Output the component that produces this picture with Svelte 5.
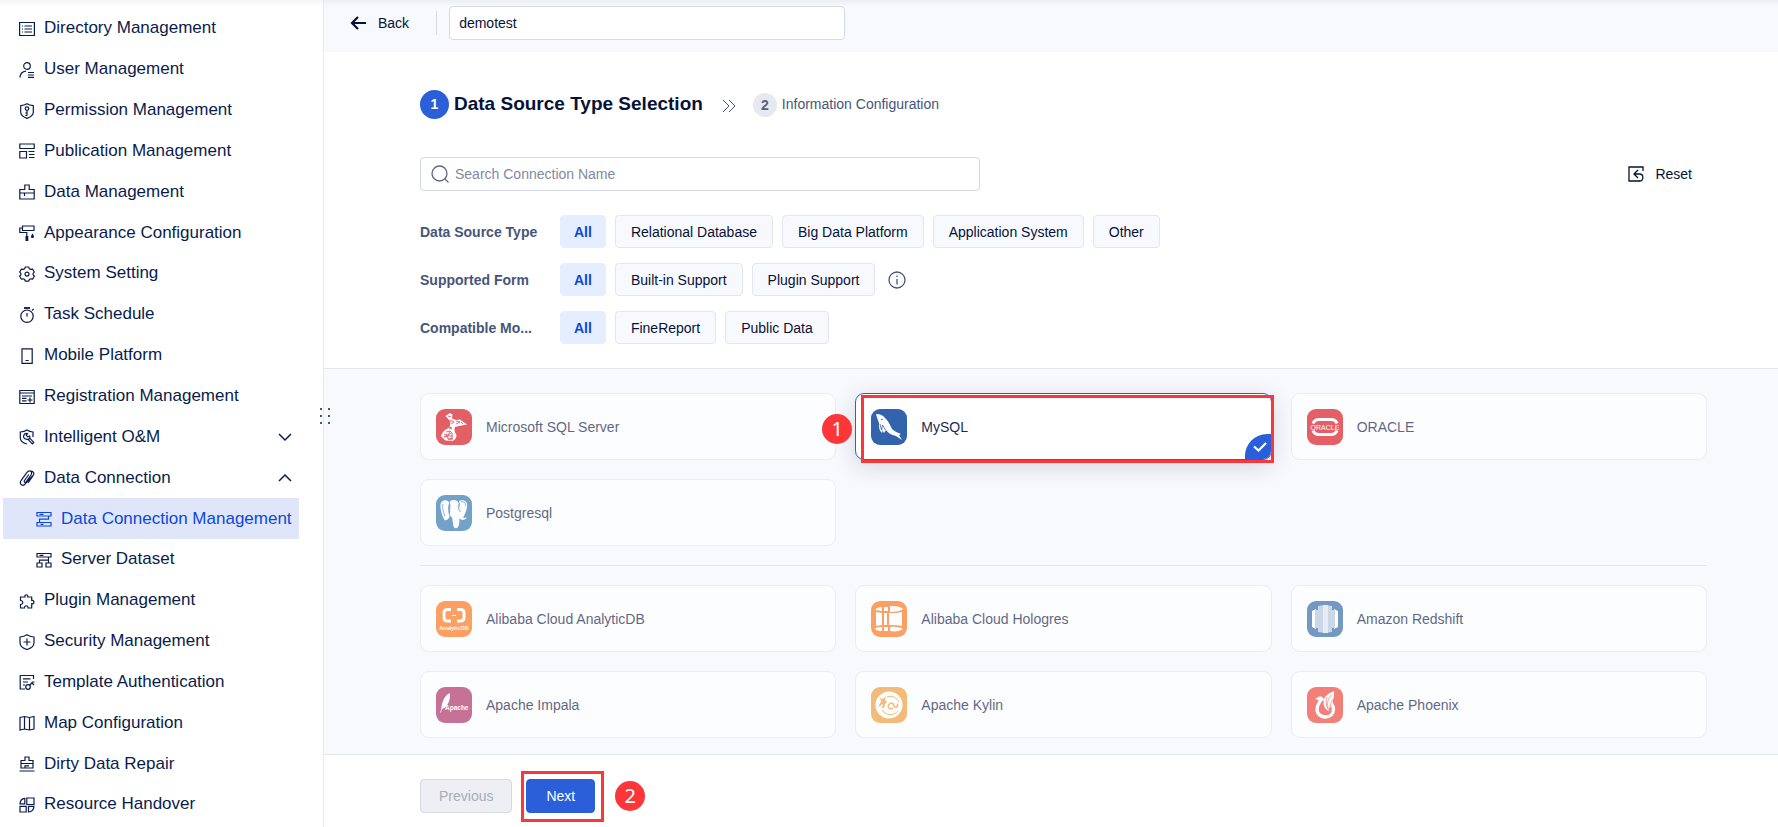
<script lang="ts">
  const navItems = [
    { label: "Directory Management", icon: "directory" },
    { label: "User Management", icon: "user" },
    { label: "Permission Management", icon: "permission" },
    { label: "Publication Management", icon: "publication" },
    { label: "Data Management", icon: "data" },
    { label: "Appearance Configuration", icon: "appearance" },
    { label: "System Setting", icon: "setting" },
    { label: "Task Schedule", icon: "schedule" },
    { label: "Mobile Platform", icon: "mobile" },
    { label: "Registration Management", icon: "registration" },
    { label: "Intelligent O&M", icon: "intelligent", arrow: "down" },
    { label: "Data Connection", icon: "connection", arrow: "up" },
    { label: "Data Connection Management", icon: "server", sub: true, active: true },
    { label: "Server Dataset", icon: "dataset", sub: true },
    { label: "Plugin Management", icon: "plugin" },
    { label: "Security Management", icon: "security" },
    { label: "Template Authentication", icon: "template" },
    { label: "Map Configuration", icon: "map" },
    { label: "Dirty Data Repair", icon: "repair" },
    { label: "Resource Handover", icon: "handover" },
  ];

  const icons: Record<string, string> = {
    directory: `<path d="M.6 1.500h14.800v13H.6z"/><path d="M3 5h1M5.500 5H13M3 8h1M5.500 8H13M3 11h1M5.500 11H13"/>`,
    user: `<circle cx="8" cy="4" r="3.300"/><path d="M1 15.500c.2-4 2.300-6 6-6.400M9 10.500h6M9 13h6M9 15.400h6"/>`,
    permission: `<path d="M8 .8c2 1.300 4 1.700 6.300 1.900v6.500c0 3-3.300 5-6.300 6.200-3-1.200-6.300-3.200-6.300-6.200V2.700C4 2.500 6 2.100 8 .8z"/><circle cx="8" cy="5.600" r="1.800"/><path d="M8 7.600v5.200M8 10H6.300M8 12.500H6.300"/>`,
    publication: `<path d="M.8 1h14.400v4.500H.8zM.8 8.500h6.700V15H.8zM9.500 8.500H15.500M10 11.500h5.500M10 14.500h5.500"/>`,
    data: `<path d="M.8 5.500h5V1h4.400v4.500h5V15H.8zM1 9h14M5.500 9v3"/>`,
    appearance: `<path d="M3.500 1H15v4.500H3.500zM3.500 3H.8v4.500h7V11"/><path d="M6.500 11h2.800v5H6.500zM13.500 8.500c2.500 3.500 1.500 4.500 0 4.500s-2.500-1 0-4.500z" fill="currentColor" stroke="none"/>`,
    setting: `<path d="M6.300 1h3.400l.7 1.700 1.300.7 1.900-.3 1.700 2.900-1.200 1.400v1.300l1.200 1.500-1.700 2.900-1.900-.3-1.300.7-.7 1.700H6.300l-.7-1.700-1.300-.7-1.900.3L.7 10.200l1.200-1.500V7.400L.7 6l1.700-2.900 1.900.3 1.300-.7z"/><circle cx="8" cy="8.100" r="2"/>`,
    schedule: `<circle cx="8" cy="9.200" r="6.200"/><path d="M8 9.500V6M13 3.500l1.700-1.500"/><path d="M5 1h6" stroke-width="1.800"/>`,
    mobile: `<path d="M3 .8h10.200v14.600H3zM6.500 12.500h3.200"/>`,
    registration: `<path d="M.8 1.500h14.400v13H.8zM1 4h14M3 7h10M3 9.300h4.500M3 11.800h4.500M8.500 11h5M11 8.500v5"/>`,
    intelligent: `<path d="M8 15C4 14 1.300 12 1.300 9V3C4 2.800 6 2.300 8 1c2 1.300 4 1.800 6 2v5"/><path d="M8.500 4.500 7.300 6.300l1.300 1.500 2.100-.8c.8 2.500-.9 3.800-2.700 3.300-2.500-.1-4-2-3.300-3.800.6-1.500 2-2.300 3.800-2zM9 10.300l4.300 4.500 1.500-1.400-4.300-4.600"/>`,
    connection: `<path d="M9.800 4.500 5.500 10.500c-.9 1.600.8 2.700 1.700 1.300L12 5c2-3.400-1.800-5.800-4-2.600L2 10.700c-2.300 3.600 2.200 6.300 4.400 3L14 5.500M10.500 1.200c3.500-.8 5.300 1.700 3.700 4.300L9 13"/>`,
    server: `<path d="M1 1.500h14V5H1zM1 11.500h14V15H1zM12.500 5v3.200H3.500v3.300M3.500 3.300h4M4.500 13.300h3"/>`,
    dataset: `<path d="M1 1.500h14V5H1zM1 11h5v4H1zM10 11h5v4h-5zM3.500 11V8.200h9V11M12.500 5v3.200M3.500 3.300h4"/>`,
    plugin: `<path d="M1.500 4H6C5 1 9.500 1 8.700 4h4v3.500c3-.7 3 4 0 3.200V15H9c.5-3-4-3-3.500 0h-4v-3.500c3 .2 3-4.200 0-4z"/>`,
    security: `<path d="M8 .8c2 1.300 4.500 2 7 2.200v5.500c0 3.500-3.500 6-7 7-3.500-1-7-3.500-7-7V3C3.500 2.800 6 2.100 8 .8z"/><path d="M8 4.500v7M4.500 8h7"/>`,
    template: `<path d="M6 15H1.200V1.500H14.500V5M4 4.800h7.500M4 8h5M4 11h2"/><circle cx="9" cy="13" r="2.300"/><path d="m10.500 11.500 3-3.500h2M13 9l2 2"/>`,
    map: `<path d="m1 2.500 4.500-1 5 1 4.500-1v12.500l-4.500 1-5-1-4.500 1zM5.500 1.500V14M10.500 2.500V15"/>`,
    repair: `<path d="M2 4.500h4V1h4v3.500h4V12H2zM2 7.500h12M6 12V9.800h4M.5 15h15"/>`,
    handover: `<path d="M7.800 1H15v6.500H7.800zM1 9.300h6.200V15H1zM1 6.800C1.200 3.500 3 1.500 5.800 1.300V6.800zM15 9.300H9.500V15c3.300-.2 5.300-2.500 5.500-5.700z"/>`,
  };

  const filters = [
    { label: "Data Source Type", options: ["Relational Database", "Big Data Platform", "Application System", "Other"] },
    { label: "Supported Form", options: ["Built-in Support", "Plugin Support"], info: true },
    { label: "Compatible Mo...", options: ["FineReport", "Public Data"] },
  ];

  const groups = [
    [
      { name: "Microsoft SQL Server", logo: "sqlserver", color: "#d91f26" },
      { name: "MySQL", logo: "mysql", color: "#3363ad" },
      { name: "ORACLE", logo: "oracle", color: "#dc2027" },
      { name: "Postgresql", logo: "postgres", color: "#3b7cb2" },
    ],
    [
      { name: "Alibaba Cloud AnalyticDB", logo: "analyticdb", color: "#ff7a22" },
      { name: "Alibaba Cloud Hologres", logo: "hologres", color: "#ff7a22" },
      { name: "Amazon Redshift", logo: "redshift", color: "#3b70aa" },
      { name: "Apache Impala", logo: "impala", color: "#b2396d" },
      { name: "Apache Kylin", logo: "kylin", color: "#f3a240" },
      { name: "Apache Phoenix", logo: "phoenix", color: "#f04d41" },
    ],
  ];

  const logos: Record<string, string> = {
    sqlserver: `<path d="m9.500 7 4.500-3 2.500 1.500-.5 4 4 1.500 4-.5 7 5-8 1.500-4 1c-1 3-.5 5 1.500 8 0 3-1.500 5-4 6l-7-.5-4.500-4c.5-4 4-7 8.500-9l1-6z" fill="#fff"/><path d="m12 7 3 1m-1 3 4 2-3 2m5-3 4 1-4 2m5-2 2 2m-14 3 3 1-3 1m-3 3 4-1 2 2m-8 1 4 1 3-2m2 3-4 0-5 1m9 1-5 1-1-4-3 2m4 2 4 1m-2-9-2 5m4-3 0 7" fill="none" stroke="#d91f26" stroke-width=".9"/>`,
    mysql: `<path d="M5 5c4 0 7 1 10 5 3 3 4 6 6 10 2 2 6 4 9 5l-2 1 3 5-6-4c-5-1-8-3-10-6l-2 3c-1-1-1-2-1-4l-1 4c-2-2-3-4-3-7v-3C7 11 6 9 5 5z" fill="#fff"/><path d="m9 15 1.500 6 1-5 3 5" fill="none" stroke="#3363ad" stroke-width=".8"/><circle cx="11" cy="10.500" r=".8" fill="#3363ad"/>`,
    oracle: `<path d="M6 14.500c1-3 3-4 6-4h12c3 0 5 1 6 4M6 21.500c1 3 3 4 6 4h12c3 0 5-1 6-4" fill="none" stroke="#fff" stroke-width="3"/><text x="18" y="20.500" font-size="7" text-anchor="middle" fill="#fff">ORACLE</text>`,
    postgres: `<path d="M12 6C7 4 4 7 4.500 12c.5 5 2 10 4 13 2 1 4-1 5-3l1-12zM23 6c5-2 9 1 8 5 0 4-2 8-4 12l4-.5c-2 3-5 3-8 1 1-6 2-12 0-17.500zM14 6c4-2 8-1 9 3l1.500 8L23 23c1 4 0 9-2 10-3 1-4-2-4-5l-1-5c-4-2-4-13-2-17z" fill="#fff"/><path d="M14 7c-2 5-2 10 .5 15l2 1M23 8.500c-1.500 3-.5 6 1.500 8.500M25 7c3-1 5 1 4.500 4M7 9c-1 3 0 8 2 12" fill="none" stroke="#3b7cb2" stroke-width=".8"/>`,
    analyticdb: `<path d="M15 8.500h-3.500q-3.500 0-3.500 3v5q0 3.500 3.500 3.500H15M21 8.500h3.500q3.500 0 3.500 3v5q0 3.500-3.500 3.500H21" fill="none" stroke="#fff" stroke-width="3"/><path d="M16 14.500h4" stroke="#fff" stroke-width="1.200"/><text x="18" y="29" font-size="5.500" font-weight="700" text-anchor="middle" fill="#fff">AnalyticDB</text>`,
    hologres: `<path d="M4 9c1-2 4-3 7-3v4zM13 6h4v4h-4zM19 5c6-.3 10 0 13 3-2 2-6 3-13 3zM5 11l6 1v12l-6 1zM13 12h3v12h-3zM18 12c5 0 9 0 13-1v14c-4-1-8-1-13-1zM4 28c1-2 4-2 7-2v4c-3 0-6-.5-7-2zM13 26h4v4h-4zM19 26c5-.5 10 0 13 2-3 2-7 3-13 2z" fill="#fff"/>`,
    redshift: `<path d="m5 10 4-2v20l-4-2zM27 8l4 2v16l-4 2z" fill="#fff"/><path d="m11 5 7-1 7 1v26l-7 1-7-1z" fill="#b6c9de"/><path d="M16 4h5v28h-5z" fill="#dfe7f0"/><path d="M8 9h3v18H8zM25 9h3v18h-3z" fill="#b6c9de"/>`,
    impala: `<path d="M13.500 6c1.500 5-1 12-5 15l-3 1c0-7 3-13 8-16z" fill="#fff"/><path d="M13 7 7 18 4.500 25.500" fill="none" stroke="#fff" stroke-width=".8"/><text x="9" y="22.500" font-size="6.500" font-weight="700" fill="#fff">Apache</text>`,
    kylin: `<circle cx="18" cy="18" r="13.500" fill="#fff"/><path d="M16 10c6-2 10 1 12 5M11 23c4 6 12 6 16 1" fill="none" stroke="#f3a240"/><path d="m9 11 3 1 3-3-1 4 2 2-2 2-1 4h-2l1-4-2 1-1 2-1-1c0-2 2-3 2-5z" fill="#f3a240"/><path d="M17 20c1-5 5-5 6-1 2 3 5 0 3-2m-8 3c-1 2 2 2 4 1" fill="none" stroke="#f3a240" stroke-width="1.500"/>`,
    phoenix: `<path d="m8 12 4-2.500h3l2 3-2 1.500z" fill="#fff"/><path d="M14 12c-.5 3-4 5-4 10 0 5 4 8 8.500 8s8-3 8-8c0-2.500-1-4-2.500-6" fill="none" stroke="#fff" stroke-width="3.400"/><path d="M27 4c-7 3-10 6-10.500 10-.5 4 1.500 8 5 10 3-6 6-11 5.500-20z" fill="#fff"/><path d="M24.500 8c-4 4-5 9-3 15M20 10c-1.500 4-1 8 1 12M26 12c-2 3-3 6-3.500 10" fill="none" stroke="#f04d41" stroke-width=".7"/>`,
  };

  let projectName = $state("demotest");
  let keyword = $state("");
  let selected = $state("MySQL");
  let picked = $state(["All", "All", "All"]);

  function reset() {
    keyword = "";
    picked = ["All", "All", "All"];
  }
</script>

<div class="page">
  <nav class="sidebar">
    {#each navItems as item}
      <a href="#{item.icon}" class="nav-item" class:sub={item.sub} class:active={item.active}>
        <svg class="nav-icon" viewBox="0 0 16 16">{@html icons[item.icon]}</svg>
        <span>{item.label}</span>
        {#if item.arrow}
          <svg class="arrow" viewBox="0 0 14 14">
            <path d={item.arrow === "down" ? "M1 4l6 6 6-6" : "M1 10l6-6 6 6"} />
          </svg>
        {/if}
      </a>
    {/each}
    <div class="drag-handle">
      {#each Array(6) as _}<i></i>{/each}
    </div>
  </nav>

  <main>
    <header class="topbar">
      <button class="back">
        <svg viewBox="0 0 16 16"><path d="M8 2 2 8l6 6M2 8h14" /></svg>
        Back
      </button>
      <input class="name-input" type="text" aria-label="Connection name" bind:value={projectName} />
    </header>

    <section class="config">
      <div class="steps">
        <span class="step-num current">1</span>
        <h1>Data Source Type Selection</h1>
        <svg class="double-arrow" viewBox="0 0 14 14"><path d="m1 1 6 6-6 6M7 1l6 6-6 6" /></svg>
        <span class="step-num">2</span>
        <span class="step-text">Information Configuration</span>
      </div>

      <div class="search-row">
        <label class="search">
          <svg viewBox="0 0 18 18"><circle cx="8.500" cy="8.500" r="7.500" /><path d="m14 14 3.500 3.500" /></svg>
          <input type="text" aria-label="Search Connection Name" placeholder="Search Connection Name" bind:value={keyword} />
        </label>
        <button class="reset" onclick={reset}>
          <svg viewBox="0 0 16 16">
            <path d="M15 5V1H1v14h11" />
            <path d="M10 4 6 8l4 4M6 8h5.500c4.500 0 4.500 7 0 7" />
          </svg>
          Reset
        </button>
      </div>

      <div class="filters">
        {#each filters as filter, i}
          <div class="filter-row">
            <span class="filter-label">{filter.label}</span>
            {#each ["All", ...filter.options] as option}
              <button class="chip" class:on={picked[i] === option} onclick={() => (picked[i] = option)}>{option}</button>
            {/each}
            {#if filter.info}
              <svg class="info" viewBox="0 0 18 18">
                <circle cx="9" cy="9" r="8" />
                <path d="M9 8v5.500M9 4.500v1.500" />
              </svg>
            {/if}
          </div>
        {/each}
      </div>
    </section>

    <section class="sources">
      {#each groups as group}
        <div class="group">
          {#each group as source}
            <div class="cell">
              <button class="card" class:selected={selected === source.name} onclick={() => (selected = source.name)}>
                <svg class="logo" viewBox="0 0 36 36">
                  <rect width="36" height="36" rx="9" fill={source.color} />
                  {@html logos[source.logo]}
                </svg>
                {source.name}
                {#if selected === source.name}
                  <span class="check">
                    <svg viewBox="0 0 14 10"><path d="m1 4.500 4.500 4L13 1" /></svg>
                  </span>
                {/if}
              </button>
              {#if source.name === "MySQL"}
                <span class="mark card-mark"></span>
                <span class="bubble card-bubble">1</span>
              {/if}
            </div>
          {/each}
        </div>
      {/each}
    </section>

    <footer>
      <button class="btn" disabled>Previous</button>
      <div class="next-wrap">
        <button class="btn primary">Next</button>
        <span class="mark next-mark"></span>
      </div>
      <span class="bubble">2</span>
    </footer>
  </main>
</div>

<style>
  :global(body) {
    background: #fff;
    font-family: "Liberation Sans", Arial, sans-serif;
    font-size: 14px;
    color: #061238;
  }

  button,
  input {
    font: inherit;
    color: inherit;
    box-sizing: border-box;
  }

  button {
    cursor: pointer;
  }

  svg {
    flex: none;
    fill: none;
    stroke: currentColor;
  }

  .page {
    position: relative;
    display: flex;
    min-height: 100vh;
  }

  .page::before {
    content: "";
    position: absolute;
    inset: 0 0 auto;
    height: 6px;
    background: linear-gradient(rgba(20, 30, 60, 0.05), transparent);
    pointer-events: none;
  }

  .sidebar {
    position: relative;
    display: flex;
    flex-direction: column;
    flex: none;
    box-sizing: border-box;
    width: 324px;
    padding: 8px 24px 2px 3px;
    border-right: 1px solid #e8eaf0;
  }

  .nav-item {
    display: flex;
    align-items: center;
    flex: 1;
    gap: 9px;
    padding: 0 7px 0 16px;
    font-size: 17px;
    line-height: 20px;
    color: #0a1c4c;
    text-decoration: none;
    white-space: nowrap;
  }

  .nav-item.sub {
    padding-left: 33px;
  }

  .nav-item.active {
    background: #e0e6fa;
    color: #0d47d9;
  }

  .nav-icon {
    width: 16px;
    height: 16px;
    margin-top: 1px;
    stroke-width: 1.2;
  }

  .arrow {
    width: 14px;
    height: 14px;
    margin-left: auto;
    stroke-width: 1.5;
  }

  .drag-handle {
    position: absolute;
    top: 50%;
    right: -7px;
    display: grid;
    grid-template-columns: 2px 2px;
    gap: 5px 6px;
    margin-top: 2px;
    transform: translateY(-50%);
    cursor: col-resize;
  }

  .drag-handle i {
    width: 2px;
    height: 2px;
    background: #47557a;
  }

  main {
    display: flex;
    flex-direction: column;
    flex: 1;
    min-width: 0;
  }

  .topbar {
    display: flex;
    align-items: center;
    box-sizing: border-box;
    height: 52px;
    padding: 0 26px 7px;
    background: #f8f9fd;
  }

  .back {
    display: flex;
    align-items: center;
    gap: 12px;
    height: 24px;
    padding: 0 27px 0 0;
    border: 0;
    border-right: 1px solid #d5d9e2;
    background: none;
  }

  .back svg {
    width: 16px;
    height: 16px;
    stroke-width: 2.2;
  }

  .name-input {
    width: 396px;
    height: 34px;
    margin-left: 12px;
    padding: 0 9px;
    border: 1px solid #d5d9e4;
    border-radius: 4px;
    background: #fff;
  }

  .config {
    padding: 38px 71px 24px 96px;
    border-bottom: 1px solid #e3e6ef;
  }

  .steps {
    display: flex;
    align-items: center;
    height: 29px;
  }

  .step-num {
    width: 24px;
    margin-right: 5px;
    border-radius: 50%;
    background: #e6e9f0;
    color: #55627d;
    font-weight: 700;
    line-height: 24px;
    text-align: center;
  }

  .step-num.current {
    width: 29px;
    background: #2b5fda;
    color: #fff;
    line-height: 29px;
  }

  h1 {
    margin: 0 0 2px;
    font-size: 19px;
    line-height: 28px;
  }

  .double-arrow {
    width: 14px;
    height: 14px;
    margin: 2px 17px 0 19px;
    color: #47557a;
  }

  .step-text {
    margin-bottom: 2px;
    color: #47557a;
  }

  .search-row {
    display: flex;
    align-items: center;
    justify-content: space-between;
    margin: 38px 0 24px;
  }

  .search {
    display: flex;
    align-items: center;
    gap: 6px;
    box-sizing: border-box;
    width: 560px;
    height: 34px;
    padding: 0 10px;
    border: 1px solid #d5d9e4;
    border-radius: 4px;
  }

  .search svg {
    width: 18px;
    height: 18px;
    color: #5d6983;
    stroke-width: 1.3;
  }

  .search input {
    flex: 1;
    min-width: 0;
    padding: 0;
    border: 0;
    outline: 0;
    background: none;
  }

  .search input::placeholder {
    color: #7f8a9f;
  }

  .reset {
    display: flex;
    align-items: center;
    gap: 11px;
    padding: 0 15px;
    border: 0;
    background: none;
  }

  .reset svg {
    width: 16px;
    height: 16px;
    stroke-width: 1.3;
  }

  .filters {
    display: flex;
    flex-direction: column;
    gap: 15px;
  }

  .filter-row {
    display: flex;
    align-items: center;
    gap: 9px;
  }

  .filter-label {
    width: 131px;
    color: #47557a;
    font-weight: 700;
    white-space: nowrap;
  }

  .chip {
    height: 33px;
    padding: 0 15px;
    border: 1px solid #e3e6ef;
    border-radius: 4px;
    background: #f8f9fd;
  }

  .chip.on {
    padding: 0 13px;
    border-color: #e5eeff;
    background: #e5eeff;
    color: #0d47d9;
    font-weight: 700;
  }

  .info {
    width: 18px;
    height: 18px;
    margin-left: 4px;
    color: #47557a;
    stroke-width: 1.3;
  }

  .sources {
    flex: 1;
    padding: 24px 71px 16px 96px;
    background: #f8f9fd;
  }

  .group {
    display: grid;
    grid-template-columns: repeat(3, 1fr);
    gap: 19px;
  }

  .group + .group {
    margin-top: 19px;
    padding-top: 19px;
    border-top: 1px solid #e3e6ef;
  }

  .cell {
    position: relative;
  }

  .card {
    position: relative;
    display: flex;
    align-items: center;
    gap: 14px;
    width: 100%;
    height: 67px;
    padding: 0 15px;
    overflow: hidden;
    border: 1px solid #e6e8ee;
    border-radius: 9px;
    background: #fff;
    color: #1b2a50;
    opacity: 0.7;
    text-align: left;
  }

  .card.selected {
    border-color: #2b5fda;
    box-shadow: 0 6px 24px rgba(9, 30, 64, 0.16);
    opacity: 1;
  }

  .logo {
    width: 36px;
    height: 36px;
    stroke: none;
  }

  .check {
    position: absolute;
    right: 0;
    bottom: 0;
    display: flex;
    align-items: center;
    justify-content: center;
    width: 26px;
    height: 25px;
    border-top-left-radius: 22px;
    background: #2b5fda;
    color: #fff;
  }

  .check svg {
    width: 14px;
    height: 10px;
    margin-left: 5px;
    stroke-width: 2.2;
  }

  .mark {
    position: absolute;
    border: 3px solid #fc3639;
    pointer-events: none;
  }

  .card-mark {
    inset: 2px -2px -3px 6px;
  }

  .bubble {
    width: 30px;
    border-radius: 50%;
    background: #fc3639;
    color: #fff;
    font-family: "Noto Sans", sans-serif;
    font-size: 20px;
    line-height: 30px;
    text-align: center;
  }

  .card-bubble {
    position: absolute;
    top: 21px;
    left: -33px;
  }

  footer {
    display: flex;
    align-items: center;
    padding: 24px 71px 14px 96px;
    border-top: 1px solid #e3e6ef;
  }

  .btn {
    height: 34px;
    padding: 0 18px;
    border: 1px solid #d5d9e4;
    border-radius: 4px;
    background: #edeff4;
  }

  .btn:disabled {
    color: #a6adba;
    cursor: default;
  }

  .btn.primary {
    padding: 0 19px;
    border-color: #2b5fda;
    background: #2b5fda;
    color: #fff;
  }

  .next-wrap {
    position: relative;
    margin: 0 20px 0 14px;
  }

  .next-mark {
    inset: -8px -9px -9px -5px;
  }
</style>
